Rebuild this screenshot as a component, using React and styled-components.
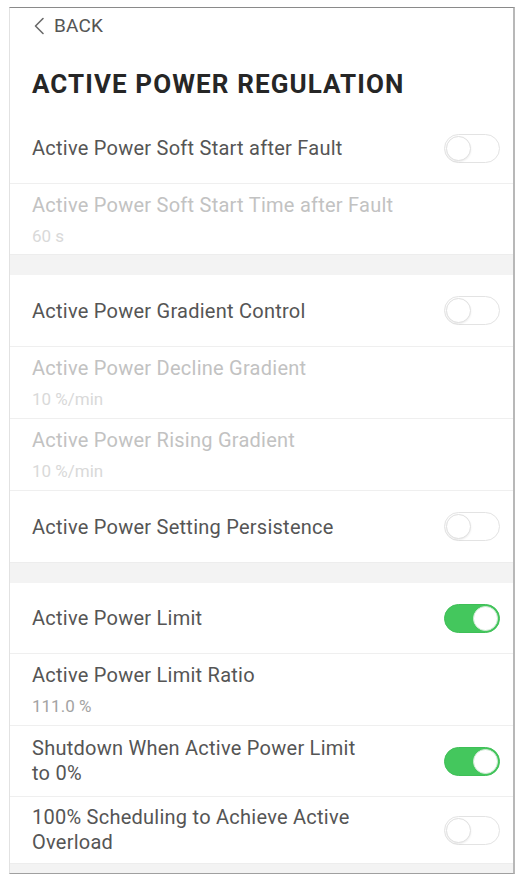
import React from 'react';
import styled, { createGlobalStyle } from 'styled-components';

const GlobalStyle = createGlobalStyle`
  html, body {
    margin: 0;
    padding: 0;
    background: #ffffff;
  }
  body {
    font-family: Roboto, "Liberation Sans", Arial, sans-serif;
    -webkit-font-smoothing: antialiased;
  }
`;

const Frame = styled.div`
  box-sizing: border-box;
  margin: 7px 5px 0 9px;
  height: 867px;
  display: flex;
  flex-direction: column;
  overflow: hidden;
  background: #ffffff;
  border-top: 1px solid #8a8a8a;
  border-left: 1px solid #e2e2e2;
  border-right: 2px solid #b8b8b8;
  border-bottom: 1px solid #a0a0a0;
`;

const BackBar = styled.div`
  height: 33px;
  display: flex;
  align-items: center;
  gap: 9px;
  padding-left: 23px;
  padding-top: 1px;
  color: #555555;
  font-size: 19px;
  letter-spacing: 0.2px;
`;

const Title = styled.h1`
  margin: 27px 0 0;
  padding-left: 22px;
  font-size: 26px;
  line-height: 30px;
  font-weight: 700;
  color: #262626;
  letter-spacing: 1.1px;
`;

const List = styled.div`
  margin-top: 14px;
  display: flex;
  flex-direction: column;
  flex: 1;
`;

const Row = styled.div`
  box-sizing: border-box;
  height: ${(p) => p.$h || 71}px;
  display: flex;
  align-items: center;
  justify-content: space-between;
  padding: 0 13px 0 22px;
  border-top: ${(p) => (p.$first ? 'none' : '1px solid #efefef')};
`;

const TextBlock = styled.div`
  display: flex;
  flex-direction: column;
  gap: ${(p) => (p.$withValue ? 9 : 0)}px;
  max-width: ${(p) => (p.$narrow ? '335px' : 'none')};
`;

const Label = styled.div`
  font-size: 20px;
  letter-spacing: 0.25px;
  line-height: ${(p) => (p.$multi ? 25 : 24)}px;
  color: ${(p) => (p.$disabled ? '#c2c2c2' : '#555555')};
`;

const Value = styled.div`
  font-size: 17px;
  line-height: 20px;
  color: ${(p) => (p.$disabled ? '#d9d9d9' : '#a3a3a3')};
`;

const Band = styled.div`
  height: ${(p) => p.$h || 20}px;
  flex: ${(p) => (p.$fill ? 1 : 'none')};
  background: #f3f3f3;
  border-top: 1px solid #ededed;
`;

const Track = styled.div`
  box-sizing: border-box;
  width: 56px;
  height: 29px;
  border-radius: 15px;
  padding: 1px;
  display: flex;
  justify-content: ${(p) => (p.$on ? 'flex-end' : 'flex-start')};
  align-items: center;
  flex-shrink: 0;
  background: ${(p) => (p.$on ? '#44c75d' : '#ffffff')};
  border: 1.5px solid ${(p) => (p.$on ? '#3fbf57' : '#e3e3e3')};
`;

const Knob = styled.div`
  box-sizing: border-box;
  width: 25px;
  height: 25px;
  border-radius: 50%;
  background: #ffffff;
  border: 1.5px solid ${(p) => (p.$on ? '#cfe9d4' : '#e0e0e0')};
  box-shadow: ${(p) => (p.$on ? 'none' : '0 1px 2px rgba(0,0,0,0.08)')};
`;

function Toggle({ on }) {
  return (
    <Track $on={on}>
      <Knob $on={on} />
    </Track>
  );
}

function Chevron() {
  return (
    <svg width="12" height="18" viewBox="0 0 12 18" fill="none">
      <path d="M10 1.5 L2.5 9 L10 16.5" stroke="#6a6a6a" strokeWidth="1.6" strokeLinecap="round" strokeLinejoin="round" />
    </svg>
  );
}

export default function App() {
  return (
    <>
      <GlobalStyle />
      <Frame>
        <BackBar>
          <Chevron />
          <span>BACK</span>
        </BackBar>
        <Title>ACTIVE POWER REGULATION</Title>
        <List>
          <Row $first $h={70}>
            <Label>Active Power Soft Start after Fault</Label>
            <Toggle />
          </Row>
          <Row>
            <TextBlock $withValue>
              <Label $disabled>Active Power Soft Start Time after Fault</Label>
              <Value $disabled>60 s</Value>
            </TextBlock>
          </Row>
          <Band />
          <Row $first>
            <Label>Active Power Gradient Control</Label>
            <Toggle />
          </Row>
          <Row $h={72}>
            <TextBlock $withValue>
              <Label $disabled>Active Power Decline Gradient</Label>
              <Value $disabled>10 %/min</Value>
            </TextBlock>
          </Row>
          <Row $h={72}>
            <TextBlock $withValue>
              <Label $disabled>Active Power Rising Gradient</Label>
              <Value $disabled>10 %/min</Value>
            </TextBlock>
          </Row>
          <Row $h={72}>
            <Label>Active Power Setting Persistence</Label>
            <Toggle />
          </Row>
          <Band />
          <Row $first $h={70}>
            <Label>Active Power Limit</Label>
            <Toggle on />
          </Row>
          <Row $h={72}>
            <TextBlock $withValue>
              <Label>Active Power Limit Ratio</Label>
              <Value>111.0 %</Value>
            </TextBlock>
          </Row>
          <Row>
            <TextBlock $narrow>
              <Label $multi>Shutdown When Active Power Limit to 0%</Label>
            </TextBlock>
            <Toggle on />
          </Row>
          <Row $h={67}>
            <TextBlock $narrow>
              <Label $multi>100% Scheduling to Achieve Active Overload</Label>
            </TextBlock>
            <Toggle />
          </Row>
          <Band $fill />
        </List>
      </Frame>
    </>
  );
}
